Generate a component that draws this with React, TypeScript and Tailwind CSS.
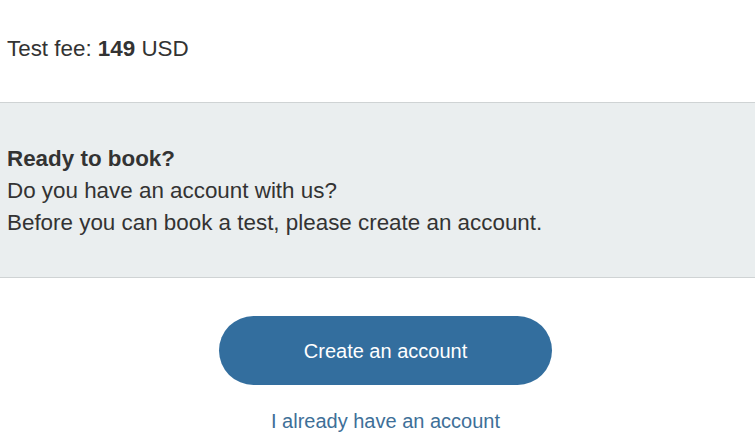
export default function App() {
  return (
    <div
      className="w-[755px] h-[438px] overflow-hidden bg-white text-[#333333] text-[22.4px] leading-[32px]"
      style={{ fontFamily: '"Liberation Sans", Arial, sans-serif' }}
    >
      {/* Fee */}
      <div className="px-[7px] pt-[33px] pb-[37px]">
        Test fee: <span className="font-bold">149</span> USD
      </div>

      {/* Booking prompt */}
      <div className="border-y border-[#cfd3d4] bg-[#eaeeef] px-[7px] pt-[40px] pb-[38px]">
        <p className="font-bold">Ready to book?</p>
        <p>Do you have an account with us?</p>
        <p>Before you can book a test, please create an account.</p>
      </div>

      {/* Actions */}
      <div className="flex flex-col items-center pl-[16px] pt-[38px] text-[20px]">
        <button className="flex h-[69px] w-[333px] items-center justify-center rounded-full bg-[#336e9e] text-white">
          Create an account
        </button>
        <a className="mt-[20px] text-[#3e6f98]">I already have an account</a>
      </div>
    </div>
  );
}
